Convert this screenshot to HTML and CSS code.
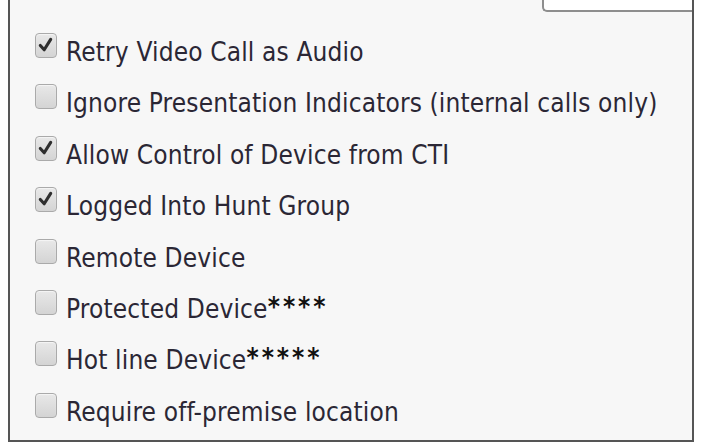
FILE: index.html
```html
<!DOCTYPE html>
<html lang="en">
<head>
    <meta charset="UTF-8">
    <title>Device Options</title>
    <link rel="stylesheet" href="styles.css">
</head>
<body>
    <div class="panel">
        <div class="panel-head">
            <div class="tab"></div>
        </div>
        <ul class="options">
            <li class="option">
                <span class="box checked"><svg viewBox="0 0 22 24"><path d="M5 12.5 L9.5 17.5 L17 5.5"/></svg></span>
                <span class="label">Retry Video Call as Audio</span>
            </li>
            <li class="option">
                <span class="box"></span>
                <span class="label">Ignore Presentation Indicators (internal calls only)</span>
            </li>
            <li class="option">
                <span class="box checked"><svg viewBox="0 0 22 24"><path d="M5 12.5 L9.5 17.5 L17 5.5"/></svg></span>
                <span class="label">Allow Control of Device from CTI</span>
            </li>
            <li class="option">
                <span class="box checked"><svg viewBox="0 0 22 24"><path d="M5 12.5 L9.5 17.5 L17 5.5"/></svg></span>
                <span class="label">Logged Into Hunt Group</span>
            </li>
            <li class="option">
                <span class="box"></span>
                <span class="label">Remote Device</span>
            </li>
            <li class="option">
                <span class="box"></span>
                <span class="label">Protected Device<span class="stars">****</span></span>
            </li>
            <li class="option">
                <span class="box"></span>
                <span class="label">Hot line Device<span class="stars">*****</span></span>
            </li>
            <li class="option">
                <span class="box"></span>
                <span class="label">Require off-premise location</span>
            </li>
        </ul>
    </div>
</body>
</html>
```

FILE: styles.css
```css
body {
    margin: 0;
    background: #fff;
    font-family: 'DejaVu Sans Condensed', 'DejaVu Sans', sans-serif;
}
.panel {
    box-sizing: border-box;
    width: 686px;
    margin: 7px 0 0 8px;
    padding-bottom: 9px;
    background: #f7f7f7;
    border: 2px solid #555;
    border-top: none;
}
.panel-head {
    display: flex;
    justify-content: flex-end;
    margin-top: -7px;
}
.tab {
    box-sizing: border-box;
    width: 150px;
    height: 12px;
    background: #fff;
    border-left: 2px solid #8e8e8e;
    border-bottom: 2px solid #8e8e8e;
    border-bottom-left-radius: 5px;
}
.options {
    list-style: none;
    margin: 0;
    padding: 8px 0 0 25px;
}
.option {
    display: flex;
    align-items: flex-start;
    height: 51.4px;
    padding-top: 13px;
    box-sizing: border-box;
}
.box {
    box-sizing: border-box;
    width: 22px;
    height: 25px;
    border: 1.5px solid #aaa;
    border-radius: 4px;
    background: linear-gradient(#e8e8e8, #d4d4d4);
    box-shadow: inset 0 1px 1px #f6f6f6;
}
.box svg {
    display: block;
    width: 19px;
    height: 22px;
}
.box svg path {
    fill: none;
    stroke: #2e2e2e;
    stroke-width: 3.6;
    stroke-linecap: round;
    stroke-linejoin: round;
}
.label {
    margin: 4px 0 0 9px;
    font-size: 26px;
    line-height: 30px;
    letter-spacing: 0.15px;
    color: #2b2735;
    white-space: nowrap;
}
.stars {
    position: relative;
    top: -2px;
    font-weight: bold;
    letter-spacing: 3px;
    color: #111;
}
```
